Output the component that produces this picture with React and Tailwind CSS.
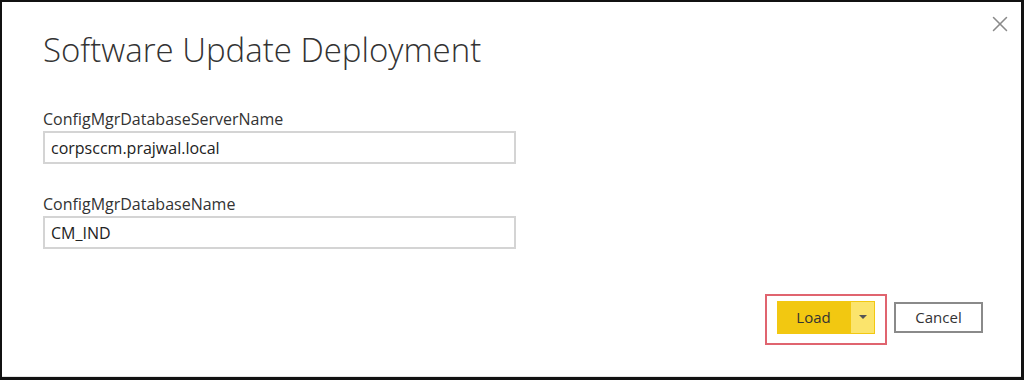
import { X } from "lucide-react";

function Field({ label, value, className }) {
  return (
    <div className={className}>
      <div className="text-[16px] leading-[20px] text-[#333]">{label}</div>
      <div className="mt-[2px] w-[473px] h-[33px] border-2 border-[#d4d4d4] flex items-center px-[6px] text-[16px] text-[#222]">
        {value}
      </div>
    </div>
  );
}

export default function App() {
  return (
    <div
      className="w-[1024px] h-[380px] bg-white border-t-2 border-l-2 border-r-[3px] border-b-[3px] border-[#111] flex flex-col"
      style={{ fontFamily: '"Open Sans", "Noto Sans", sans-serif' }}
    >
      <div className="flex-1 flex flex-col border-b border-[#e4e4e4]">
        <div className="flex justify-between">
          <h1 className="ml-[41px] mt-[25px] text-[33px] leading-[45px] font-light text-[#333]">
            Software Update Deployment
          </h1>
          <button className="mt-[9px] mr-[8px] w-[26px] h-[26px] flex items-center justify-center text-[#8a8a8a]">
            <X size={26} strokeWidth={1.4} />
          </button>
        </div>

        <Field
          className="ml-[41px] mt-[37px]"
          label="ConfigMgrDatabaseServerName"
          value="corpsccm.prajwal.local"
        />
        <Field
          className="ml-[41px] mt-[30px]"
          label="ConfigMgrDatabaseName"
          value="CM_IND"
        />

        <div className="flex justify-end items-start mt-[45px] mr-[38px] gap-[7px]">
          <div className="border-2 border-[#e0646f] px-[10px] pt-[5px] pb-[9px]">
            <div className="flex h-[33px]">
              <button className="w-[73px] bg-[#f2c811] text-[15px] text-[#333]">
                Load
              </button>
              <button className="w-[25px] bg-[#fbe46c] border border-[#f2c811] flex items-center justify-center">
                <svg width="8" height="5" viewBox="0 0 8 5">
                  <path d="M0 0 L8 0 L4 4 Z" fill="#555" />
                </svg>
              </button>
            </div>
          </div>
          <button className="mt-[8px] w-[89px] h-[31px] border-2 border-[#8a8a8a] bg-white text-[15px] text-[#333]">
            Cancel
          </button>
        </div>
      </div>
    </div>
  );
}
